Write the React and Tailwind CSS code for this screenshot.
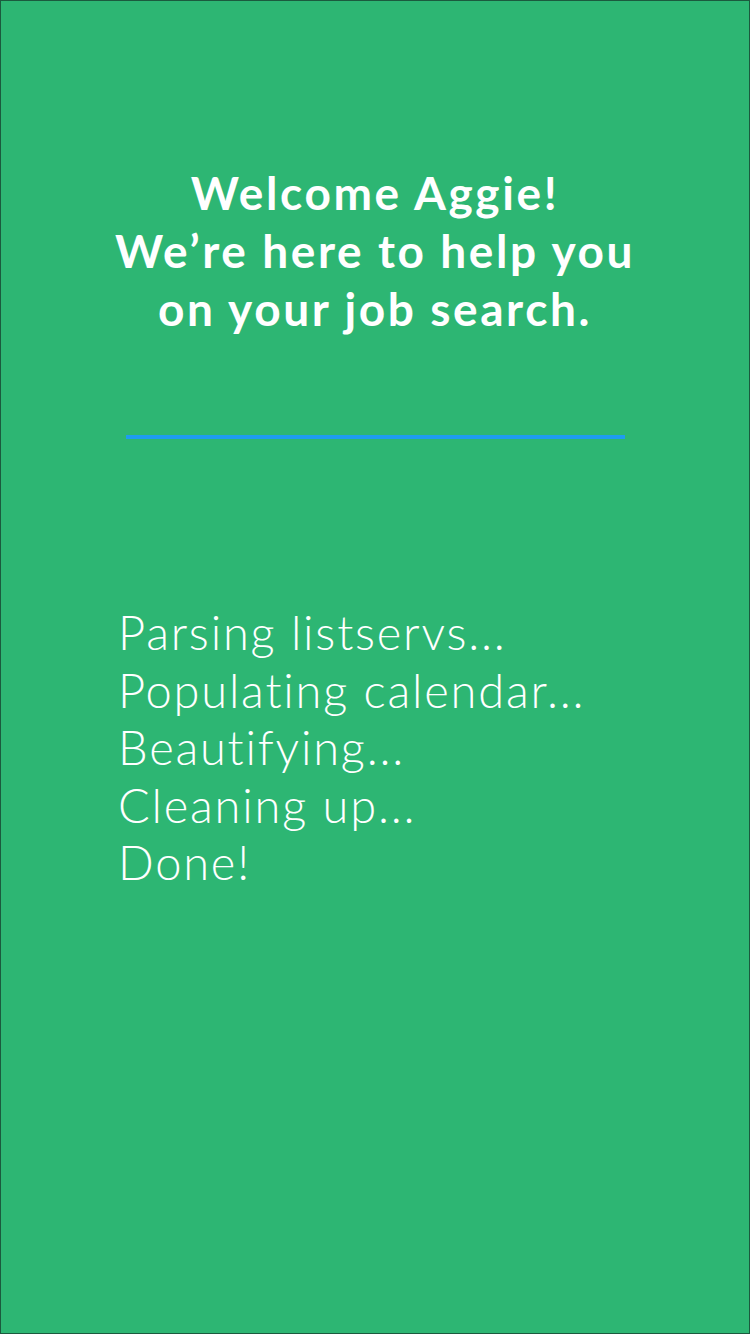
export default function App() {
  return (
    <div className="w-[750px] h-[1334px] bg-[#2db673] border border-[#1b5a3e] flex flex-col items-center font-['Lato','Open_Sans',sans-serif]">
      <h1 className="mt-[163px] text-white text-center font-bold text-[46px] leading-[58px] tracking-[2.6px]">
        Welcome Aggie!<br />We’re here to help you<br />on your job search.
      </h1>
      <div className="mt-[97px] w-[499px] h-[4px] bg-[#1e9cf0]" />
      <div className="self-start ml-[117px] mt-[165px] text-white font-light text-[47px] leading-[57.5px] tracking-[1.8px]">
        <div>Parsing listservs...</div>
        <div>Populating calendar...</div>
        <div>Beautifying...</div>
        <div>Cleaning up...</div>
        <div>Done!</div>
      </div>
    </div>
  );
}
